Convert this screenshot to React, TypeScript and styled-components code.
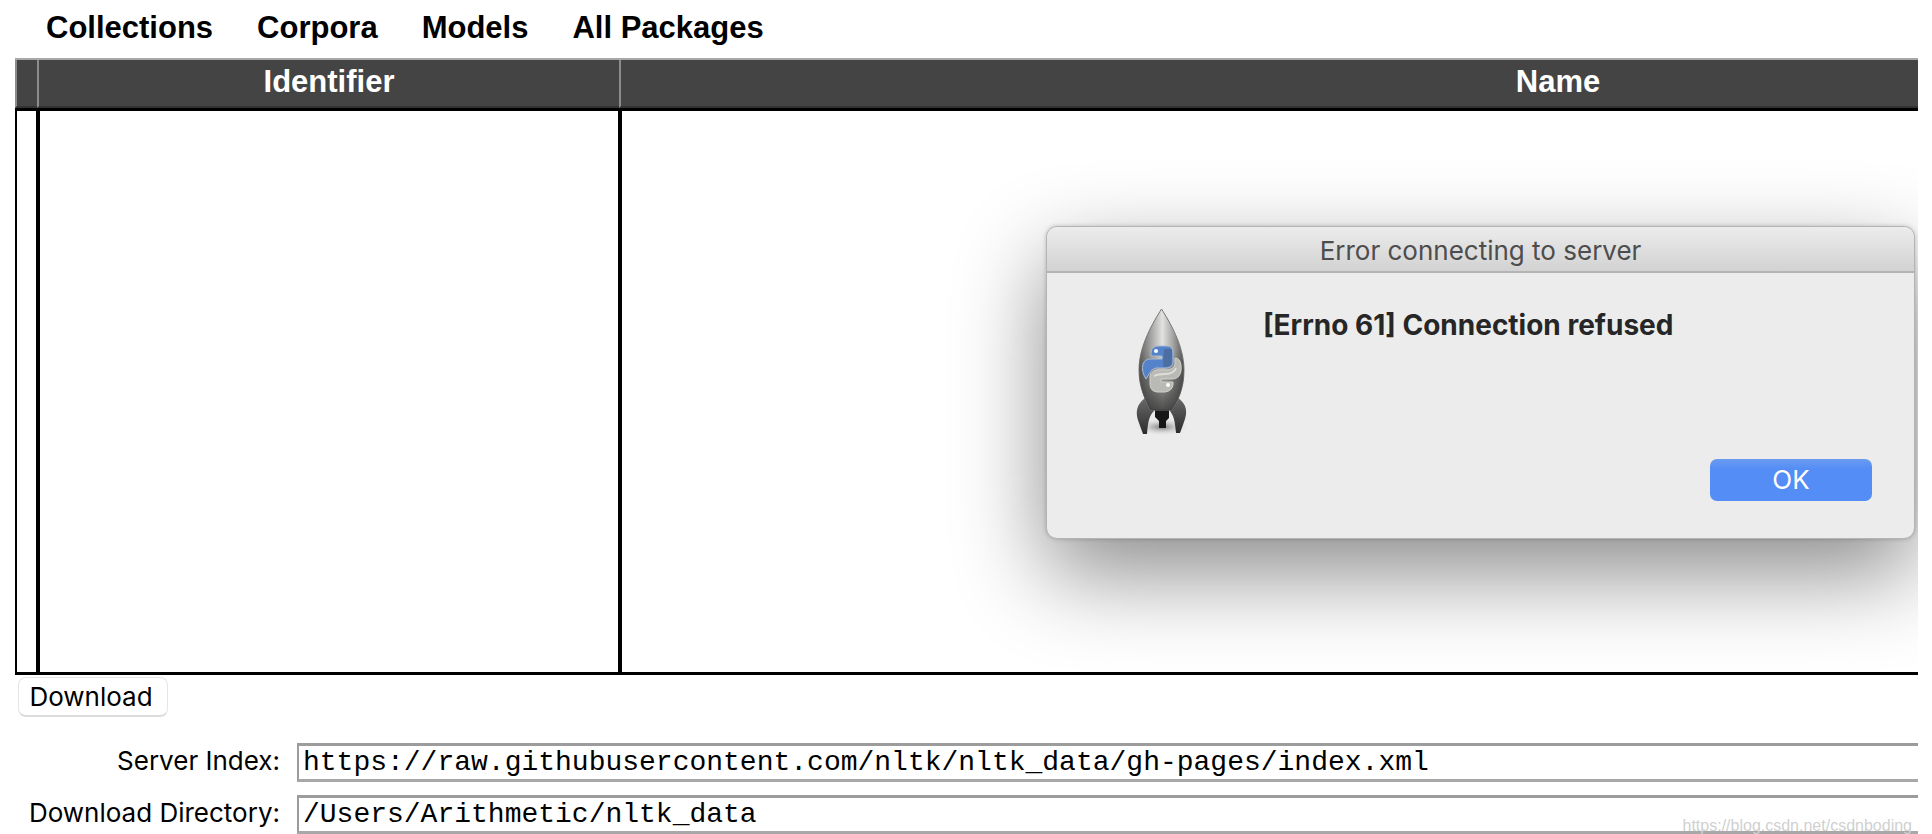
import React from "react";
import styled, { createGlobalStyle } from "styled-components";

const UI_FONT = `Inter, "Liberation Sans", sans-serif`;
const HEADING_FONT = `"Liberation Sans", Arial, sans-serif`;
const MONO_FONT = `"Liberation Mono", "Courier New", monospace`;

const GlobalStyle = createGlobalStyle`
  *, *::before, *::after { box-sizing: border-box; }
  body { margin: 0; background: #fff; color: #000; font-family: ${UI_FONT}; }
  button, input { font: inherit; color: inherit; margin: 0; }
`;

const Window = styled.main`
  position: relative;
  height: 100vh;
  min-height: 640px;
  margin-right: 14px;
  display: flex;
  flex-direction: column;
  overflow: hidden;
`;

const Tabs = styled.nav`
  flex: none;
  display: flex;
  gap: 44px;
  height: 58px;
  padding: 10px 0 0 46px;
`;

const Tab = styled.button`
  align-self: flex-start;
  padding: 0;
  border: 0;
  background: none;
  font: bold 31px/36px ${HEADING_FONT};
`;

const PackageTable = styled.table`
  flex: 1;
  display: flex;
  flex-direction: column;
  margin-left: 15px;
  min-height: 0;
  overflow: hidden;
`;

const HeadGroup = styled.thead`
  display: block;
  height: 53px;
  border-top: 2px solid #a8a8a8;
  border-bottom: 3px solid #000;
  background: #444;
`;

const BodyGroup = styled.tbody`
  flex: 1;
  display: block;
  border-bottom: 3px solid #000;
`;

/* The name column keeps its full width and runs on past the window's edge. */
const Row = styled.tr`
  display: grid;
  grid-template-columns: 22px 582px minmax(1876px, 1fr);
  height: 100%;
`;

const HeadCell = styled.th`
  padding: 4px 0 0;
  border-left: 2px solid #8c8c8c;
  border-bottom: 2px solid #333;
  color: #fff;
  font: bold 31px/36px ${HEADING_FONT};
`;

const BodyCell = styled.td<{ $first?: boolean }>`
  padding: 0;
  border-left: ${(p) => (p.$first ? "2px" : "4px")} solid #000;
  margin-left: ${(p) => (p.$first ? "0" : "-1px")};
`;

const Footer = styled.footer`
  flex: none;
`;

const DownloadButton = styled.button`
  display: block;
  width: 150px;
  height: 40px;
  margin: 2px 0 0 18px;
  padding: 0 4px 0 0;
  border: 1px solid #e6e6e6;
  border-bottom: 2px solid #dcdcdc;
  border-radius: 8px;
  background: #fff;
  font-size: 26px;
  line-height: 36px;
`;

const Settings = styled.form`
  display: grid;
  grid-template-columns: 280px 1fr;
  column-gap: 17px;
  row-gap: 13px;
  padding-top: 26px;
`;

const FieldLabel = styled.label`
  text-align: right;
  white-space: nowrap;
  font-size: 26px;
  line-height: 35px;
`;

const Field = styled.input`
  width: 100%;
  height: 39px;
  padding: 0 0 0 4px;
  border: 0 solid #9c9c9c;
  border-width: 3px 0 3px 2px;
  border-bottom-color: #a8a8a8;
  border-radius: 0;
  outline: 0;
  background: #fff;
  font: 28px/32px ${MONO_FONT};
`;

const Dialog = styled.section`
  position: absolute;
  top: 226px;
  right: 3px;
  width: 869px;
  height: 313px;
  border: 1px solid #b4b4b4;
  border-radius: 11px;
  background: #ececec;
  box-shadow: 0 34px 90px rgba(0, 0, 0, 0.46), 0 0 4px rgba(0, 0, 0, 0.2);
  display: flex;
  flex-direction: column;
`;

const DialogTitle = styled.h1`
  margin: 0;
  height: 46px;
  border-bottom: 2px solid #b4b4b4;
  border-radius: 10px 10px 0 0;
  background: linear-gradient(#ececec, #d2d2d2);
  color: #4d4d4d;
  text-align: center;
  font-weight: 400;
  font-size: 26px;
  line-height: 48px;
`;

const DialogBody = styled.div`
  flex: 1;
  display: grid;
  grid-template-columns: 132px 1fr;
  grid-template-rows: 1fr auto;
  padding: 33px 42px 37px 84px;
`;

const RocketIcon = styled.svg`
  display: block;
  width: 60px;
  height: 132px;
`;

const Message = styled.p`
  margin: 0;
  color: #262626;
  font-weight: 700;
  font-size: 28px;
  line-height: 38px;
`;

const OkButton = styled.button`
  grid-column: 2;
  justify-self: end;
  width: 162px;
  height: 42px;
  padding: 0;
  border: 0;
  border-radius: 7px;
  background: linear-gradient(#6b9cf0, #548df5 10px);
  color: #fff;
  font-size: 26px;
  line-height: 42px;
`;

const Watermark = styled.span`
  position: absolute;
  right: 6px;
  bottom: 0;
  color: #d0d0d0;
  font: 16px/16px ${HEADING_FONT};
`;

const TABS = ["Collections", "Corpora", "Models", "All Packages"];

function Rocket() {
  return (
    <RocketIcon viewBox="0 0 60 132" role="img" aria-label="Python launcher">
      <defs>
        <linearGradient id="hull" x1="0" x2="1">
          <stop offset="0" stopColor="#5e5e5e" />
          <stop offset=".25" stopColor="#a0a09e" />
          <stop offset=".52" stopColor="#e2e2e0" />
          <stop offset=".75" stopColor="#a6a6a4" />
          <stop offset="1" stopColor="#555" />
        </linearGradient>
        <linearGradient id="shade" x1="0" x2="0" y1="0" y2="1">
          <stop offset=".4" stopColor="#333" stopOpacity="0" />
          <stop offset="1" stopColor="#333" stopOpacity=".85" />
        </linearGradient>
        <linearGradient id="fin" x1="0" x2="0" y1="0" y2="1">
          <stop offset="0" stopColor="#6a6a6a" />
          <stop offset="1" stopColor="#2c2c2c" />
        </linearGradient>
        <radialGradient id="ground">
          <stop offset="0" stopColor="#777" />
          <stop offset="1" stopColor="#ececec" stopOpacity="0" />
        </radialGradient>
      </defs>
      <ellipse cx="31" cy="121" rx="28" ry="9" fill="url(#ground)" />
      <path d="M14 92C5 99 4 107 8 117L12 128H16C17 116 18 109 24 104L20 92Z" fill="url(#fin)" />
      <path d="M46 91C56 98 57 106 53 116L49 127H45C44 116 43 109 38 104L42 92Z" fill="url(#fin)" />
      <path d="M24 103H38V112L35 115V122H28V115L24 111Z" fill="#171717" />
      <path d="M30.500 3C23 15 8 39 8 64C8 83 15 94 19 104H41C47 94 53 83 53 64C53 39 38 15 30.500 3Z" fill="url(#hull)" stroke="#777" strokeWidth="1" />
      <path d="M30.500 3C23 15 8 39 8 64C8 83 15 94 19 104H41C47 94 53 83 53 64C53 39 38 15 30.500 3Z" fill="url(#shade)" />
      <path d="M20 47Q20 40 28 40H36Q42 40 42 47V56Q42 61 36 62H25Q20 63 18 68L15 73Q10 65 12 58Q14 53 19 53H31V50H20Z" fill="#5583cb" stroke="#a9b8cd" strokeWidth="1" />
      <path d="M33 43H41V56Q41 60 35 61H32Z" fill="#4a5f85" opacity=".6" />
      <path d="M44 52Q49 52 50 59Q51 67 47 71Q45 73 41 73H30V76H42V79Q41 85 34 86H26Q19 85 19 78V70Q20 65 26 64H37Q43 63 44 58Z" fill="#b9b9b5" stroke="#d0d0cc" strokeWidth="1" />
      <path d="M23 70Q27 68 34 68Q43 68 45 62" fill="none" stroke="#deded9" strokeWidth="2" />
      <circle cx="25" cy="45" r="2" fill="#fff" />
      <circle cx="37" cy="79" r="2" fill="#fff" />
    </RocketIcon>
  );
}

export default function App() {
  return (
    <>
      <GlobalStyle />
      <Window>
        <Tabs aria-label="Package groups">
          {TABS.map((name) => (
            <Tab key={name} type="button">{name}</Tab>
          ))}
        </Tabs>
        <PackageTable>
          <HeadGroup>
            <Row>
              <HeadCell scope="col" />
              <HeadCell scope="col">Identifier</HeadCell>
              <HeadCell scope="col">Name</HeadCell>
            </Row>
          </HeadGroup>
          <BodyGroup>
            <Row>
              <BodyCell $first />
              <BodyCell />
              <BodyCell />
            </Row>
          </BodyGroup>
        </PackageTable>
        <Footer>
          <DownloadButton type="button">Download</DownloadButton>
          <Settings>
            <FieldLabel htmlFor="server-index">Server Index:</FieldLabel>
            <Field id="server-index" spellCheck={false} defaultValue="https://raw.githubusercontent.com/nltk/nltk_data/gh-pages/index.xml" />
            <FieldLabel htmlFor="download-dir">Download Directory:</FieldLabel>
            <Field id="download-dir" spellCheck={false} defaultValue="/Users/Arithmetic/nltk_data" />
          </Settings>
        </Footer>
        <Dialog role="alertdialog" aria-labelledby="dialog-title" aria-describedby="dialog-message">
          <DialogTitle id="dialog-title">Error connecting to server</DialogTitle>
          <DialogBody>
            <Rocket />
            <Message id="dialog-message">[Errno 61] Connection refused</Message>
            <OkButton type="button">OK</OkButton>
          </DialogBody>
        </Dialog>
        <Watermark>https://blog.csdn.net/csdnboding</Watermark>
      </Window>
    </>
  );
}
